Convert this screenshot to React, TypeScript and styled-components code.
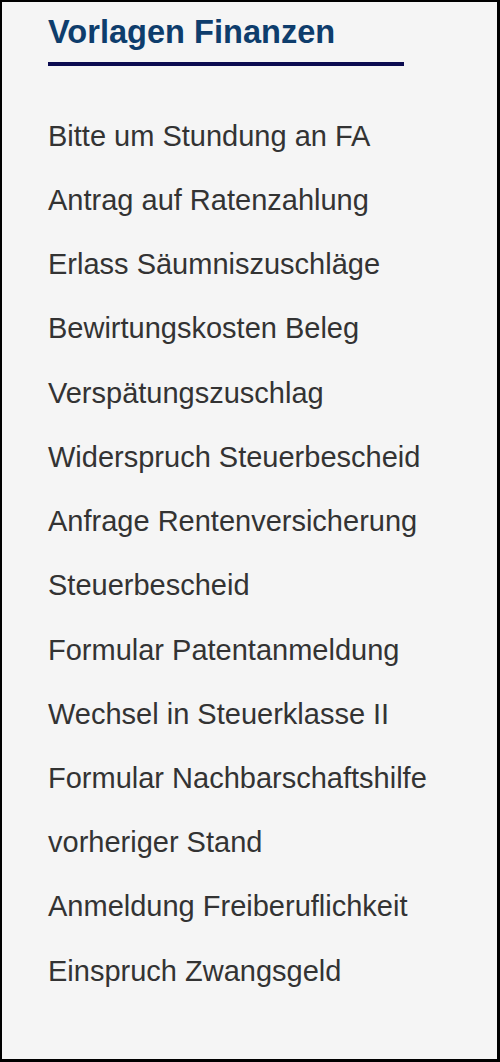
import React from "react";
import styled, { createGlobalStyle } from "styled-components";

const Global = createGlobalStyle`
  html, body {
    margin: 0;
    padding: 0;
    background: #000;
  }
  #root {
    width: 500px;
    height: 1062px;
  }
`;

const Panel = styled.aside`
  box-sizing: border-box;
  width: 500px;
  height: 1062px;
  background: #f5f5f5;
  border-style: solid;
  border-color: #000;
  border-width: 2px 3px 3px 2px;
  padding: 11px 0 0 46px;
  font-family: "Liberation Sans", Arial, sans-serif;
`;

const Title = styled.h2`
  margin: 0;
  font-size: 32.6px;
  line-height: 37.26px;
  font-weight: 700;
  color: #0e3d6c;
`;

const Rule = styled.div`
  width: 356px;
  height: 3.6px;
  margin-top: 12px;
  background: #0b0b50;
`;

const List = styled.ul`
  list-style: none;
  margin: 37.8px 0 0;
  padding: 0;
`;

const Item = styled.li`
  font-size: 29px;
  line-height: 64.23px;
  color: #333;
  white-space: nowrap;
`;

const items = [
  "Bitte um Stundung an FA",
  "Antrag auf Ratenzahlung",
  "Erlass Säumniszuschläge",
  "Bewirtungskosten Beleg",
  "Verspätungszuschlag",
  "Widerspruch Steuerbescheid",
  "Anfrage Rentenversicherung",
  "Steuerbescheid",
  "Formular Patentanmeldung",
  "Wechsel in Steuerklasse II",
  "Formular Nachbarschaftshilfe",
  "vorheriger Stand",
  "Anmeldung Freiberuflichkeit",
  "Einspruch Zwangsgeld",
];

export default function App() {
  return (
    <>
      <Global />
      <Panel>
        <Title>Vorlagen Finanzen</Title>
        <Rule />
        <List>
          {items.map((t) => (
            <Item key={t}>{t}</Item>
          ))}
        </List>
      </Panel>
    </>
  );
}
